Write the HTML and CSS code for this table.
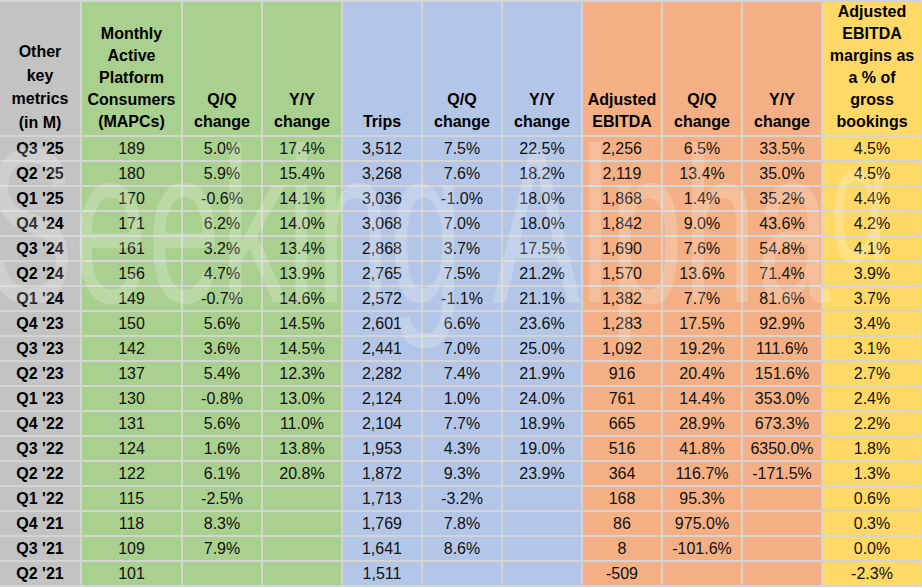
FILE: index.html
```html
<!DOCTYPE html>
<html lang="en">
<head>
<meta charset="utf-8">
<title>Other key metrics</title>
<link rel="stylesheet" href="styles.css">
</head>
<body>
<div class="sheet">
  <div class="hd gray first">Other<br>key<br>metrics<br>(in M)</div>
  <div class="hd green">Monthly<br>Active<br>Platform<br>Consumers<br>(MAPCs)</div>
  <div class="hd green">Q/Q<br>change</div>
  <div class="hd green">Y/Y<br>change</div>
  <div class="hd blue">Trips</div>
  <div class="hd blue">Q/Q<br>change</div>
  <div class="hd blue">Y/Y<br>change</div>
  <div class="hd orange">Adjusted<br>EBITDA</div>
  <div class="hd orange">Q/Q<br>change</div>
  <div class="hd orange">Y/Y<br>change</div>
  <div class="hd yellow">Adjusted<br>EBITDA<br>margins as<br>a % of<br>gross<br>bookings</div>

  <div class="lb gray">Q3 '25</div><div class="c green">189</div><div class="c green">5.0%</div><div class="c green">17.4%</div><div class="c blue">3,512</div><div class="c blue">7.5%</div><div class="c blue">22.5%</div><div class="c orange">2,256</div><div class="c orange">6.5%</div><div class="c orange">33.5%</div><div class="c yellow">4.5%</div>
  <div class="lb gray">Q2 '25</div><div class="c green">180</div><div class="c green">5.9%</div><div class="c green">15.4%</div><div class="c blue">3,268</div><div class="c blue">7.6%</div><div class="c blue">18.2%</div><div class="c orange">2,119</div><div class="c orange">13.4%</div><div class="c orange">35.0%</div><div class="c yellow">4.5%</div>
  <div class="lb gray">Q1 '25</div><div class="c green">170</div><div class="c green">-0.6%</div><div class="c green">14.1%</div><div class="c blue">3,036</div><div class="c blue">-1.0%</div><div class="c blue">18.0%</div><div class="c orange">1,868</div><div class="c orange">1.4%</div><div class="c orange">35.2%</div><div class="c yellow">4.4%</div>
  <div class="lb gray">Q4 '24</div><div class="c green">171</div><div class="c green">6.2%</div><div class="c green">14.0%</div><div class="c blue">3,068</div><div class="c blue">7.0%</div><div class="c blue">18.0%</div><div class="c orange">1,842</div><div class="c orange">9.0%</div><div class="c orange">43.6%</div><div class="c yellow">4.2%</div>
  <div class="lb gray">Q3 '24</div><div class="c green">161</div><div class="c green">3.2%</div><div class="c green">13.4%</div><div class="c blue">2,868</div><div class="c blue">3.7%</div><div class="c blue">17.5%</div><div class="c orange">1,690</div><div class="c orange">7.6%</div><div class="c orange">54.8%</div><div class="c yellow">4.1%</div>
  <div class="lb gray">Q2 '24</div><div class="c green">156</div><div class="c green">4.7%</div><div class="c green">13.9%</div><div class="c blue">2,765</div><div class="c blue">7.5%</div><div class="c blue">21.2%</div><div class="c orange">1,570</div><div class="c orange">13.6%</div><div class="c orange">71.4%</div><div class="c yellow">3.9%</div>
  <div class="lb gray">Q1 '24</div><div class="c green">149</div><div class="c green">-0.7%</div><div class="c green">14.6%</div><div class="c blue">2,572</div><div class="c blue">-1.1%</div><div class="c blue">21.1%</div><div class="c orange">1,382</div><div class="c orange">7.7%</div><div class="c orange">81.6%</div><div class="c yellow">3.7%</div>
  <div class="lb gray">Q4 '23</div><div class="c green">150</div><div class="c green">5.6%</div><div class="c green">14.5%</div><div class="c blue">2,601</div><div class="c blue">6.6%</div><div class="c blue">23.6%</div><div class="c orange">1,283</div><div class="c orange">17.5%</div><div class="c orange">92.9%</div><div class="c yellow">3.4%</div>
  <div class="lb gray">Q3 '23</div><div class="c green">142</div><div class="c green">3.6%</div><div class="c green">14.5%</div><div class="c blue">2,441</div><div class="c blue">7.0%</div><div class="c blue">25.0%</div><div class="c orange">1,092</div><div class="c orange">19.2%</div><div class="c orange">111.6%</div><div class="c yellow">3.1%</div>
  <div class="lb gray">Q2 '23</div><div class="c green">137</div><div class="c green">5.4%</div><div class="c green">12.3%</div><div class="c blue">2,282</div><div class="c blue">7.4%</div><div class="c blue">21.9%</div><div class="c orange">916</div><div class="c orange">20.4%</div><div class="c orange">151.6%</div><div class="c yellow">2.7%</div>
  <div class="lb gray">Q1 '23</div><div class="c green">130</div><div class="c green">-0.8%</div><div class="c green">13.0%</div><div class="c blue">2,124</div><div class="c blue">1.0%</div><div class="c blue">24.0%</div><div class="c orange">761</div><div class="c orange">14.4%</div><div class="c orange">353.0%</div><div class="c yellow">2.4%</div>
  <div class="lb gray">Q4 '22</div><div class="c green">131</div><div class="c green">5.6%</div><div class="c green">11.0%</div><div class="c blue">2,104</div><div class="c blue">7.7%</div><div class="c blue">18.9%</div><div class="c orange">665</div><div class="c orange">28.9%</div><div class="c orange">673.3%</div><div class="c yellow">2.2%</div>
  <div class="lb gray">Q3 '22</div><div class="c green">124</div><div class="c green">1.6%</div><div class="c green">13.8%</div><div class="c blue">1,953</div><div class="c blue">4.3%</div><div class="c blue">19.0%</div><div class="c orange">516</div><div class="c orange">41.8%</div><div class="c orange">6350.0%</div><div class="c yellow">1.8%</div>
  <div class="lb gray">Q2 '22</div><div class="c green">122</div><div class="c green">6.1%</div><div class="c green">20.8%</div><div class="c blue">1,872</div><div class="c blue">9.3%</div><div class="c blue">23.9%</div><div class="c orange">364</div><div class="c orange">116.7%</div><div class="c orange">-171.5%</div><div class="c yellow">1.3%</div>
  <div class="lb gray">Q1 '22</div><div class="c green">115</div><div class="c green">-2.5%</div><div class="c green"></div><div class="c blue">1,713</div><div class="c blue">-3.2%</div><div class="c blue"></div><div class="c orange">168</div><div class="c orange">95.3%</div><div class="c orange"></div><div class="c yellow">0.6%</div>
  <div class="lb gray">Q4 '21</div><div class="c green">118</div><div class="c green">8.3%</div><div class="c green"></div><div class="c blue">1,769</div><div class="c blue">7.8%</div><div class="c blue"></div><div class="c orange">86</div><div class="c orange">975.0%</div><div class="c orange"></div><div class="c yellow">0.3%</div>
  <div class="lb gray">Q3 '21</div><div class="c green">109</div><div class="c green">7.9%</div><div class="c green"></div><div class="c blue">1,641</div><div class="c blue">8.6%</div><div class="c blue"></div><div class="c orange">8</div><div class="c orange">-101.6%</div><div class="c orange"></div><div class="c yellow">0.0%</div>
  <div class="lb gray">Q2 '21</div><div class="c green">101</div><div class="c green"></div><div class="c green"></div><div class="c blue">1,511</div><div class="c blue"></div><div class="c blue"></div><div class="c orange">-509</div><div class="c orange"></div><div class="c orange"></div><div class="c yellow">-2.3%</div>
</div>
<div class="watermark" aria-hidden="true">Seeking Alpha<span class="alpha">α</span></div>
</body>
</html>
```

FILE: styles.css
```css
html, body {
  margin: 0;
  padding: 0;
  background: #ffffff;
}

body {
  position: relative;
  width: 922px;
  height: 588px;
  overflow: hidden;
  font-family: "Liberation Sans", Arial, sans-serif;
  font-size: 16px;
  color: #000000;
}

.sheet {
  display: grid;
  grid-template-columns: 80px 99px 78px 78px 78px 78px 78px 78px 78px 78px 98px;
  grid-template-rows: 133px repeat(18, 23px);
  gap: 2px;
  padding: 2px 1px 2px 0;
  width: max-content;
  background: #d4d4d4;
}

.gray { background: #c3c3c3; }
.green { background: #a9d08e; }
.blue { background: #b4c6e7; }
.orange { background: #f4b084; }
.yellow { background: #ffd966; }

.hd {
  display: flex;
  flex-direction: column;
  justify-content: flex-end;
  align-items: center;
  text-align: center;
  font-weight: bold;
  line-height: 22px;
  padding-bottom: 2px;
  box-sizing: border-box;
  white-space: nowrap;
}

.hd.first {
  line-height: 23.5px;
  padding-bottom: 1px;
}

.lb,
.c {
  display: flex;
  align-items: center;
  justify-content: center;
  white-space: nowrap;
}

.lb {
  font-weight: bold;
}

.c {
  color: #111111;
}

.watermark {
  position: absolute;
  left: -14px;
  top: 116px;
  font-family: "Liberation Sans", Arial, sans-serif;
  font-size: 220px;
  line-height: 1;
  white-space: nowrap;
  color: rgba(255, 255, 255, 0.2);
  transform-origin: 0 0;
  transform: scaleX(0.6);
  pointer-events: none;
}

.alpha {
  font-size: 170px;
  vertical-align: 40px;
}
```
